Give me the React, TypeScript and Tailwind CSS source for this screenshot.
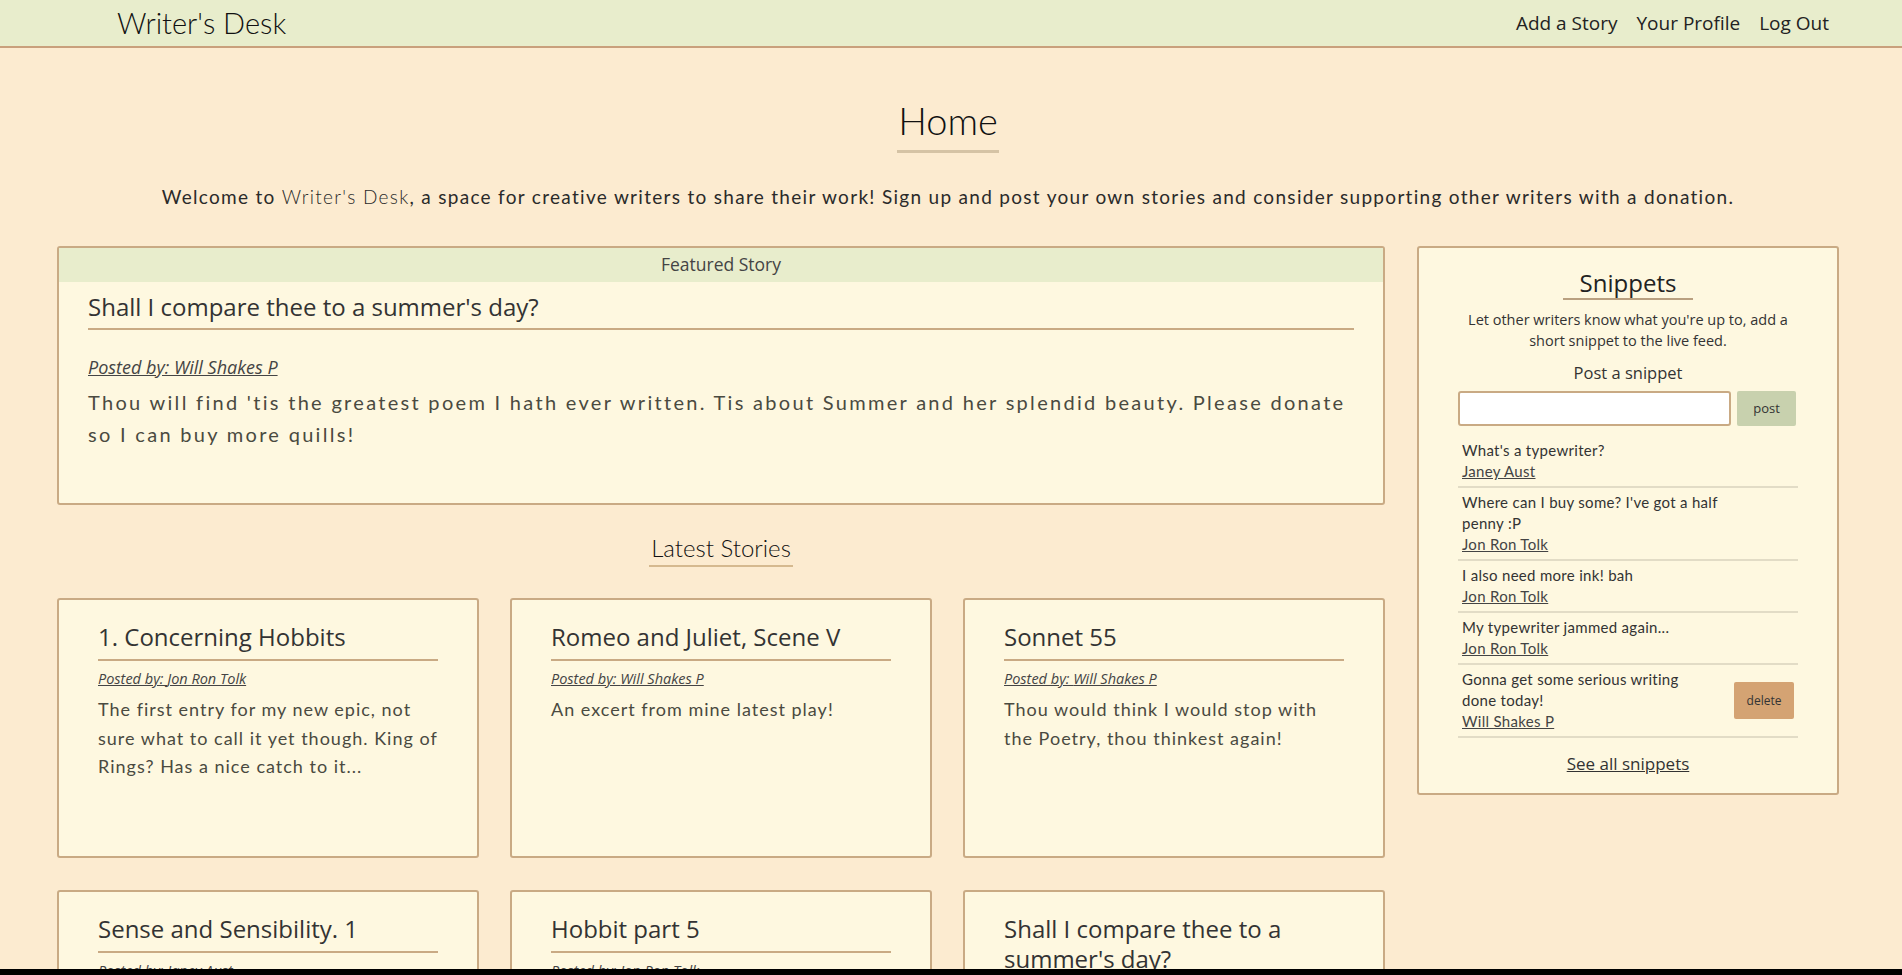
const hand = "font-['Lato','Open_Sans',sans-serif] font-light";
const round = "font-['Lato','Noto_Sans',sans-serif]";
const ui = "font-['Open_Sans','Noto_Sans',sans-serif]";

const stories = [
  { title: "1. Concerning Hobbits", author: "Jon Ron Tolk", body: "The first entry for my new epic, not sure what to call it yet though. King of Rings? Has a nice catch to it..." },
  { title: "Romeo and Juliet, Scene V", author: "Will Shakes P", body: "An excert from mine latest play!" },
  { title: "Sonnet 55", author: "Will Shakes P", body: "Thou would think I would stop with the Poetry, thou thinkest again!" },
  { title: "Sense and Sensibility. 1", author: "Janey Aust", body: "Chapter one of my newest work." },
  { title: "Hobbit part 5", author: "Jon Ron Tolk", body: "The adventure continues." },
  { title: "Shall I compare thee to a summer's day?", author: "Will Shakes P", body: "Thou will find 'tis the greatest poem I hath ever written." },
];

const snippets = [
  { text: "What's a typewriter?", author: "Janey Aust" },
  { text: "Where can I buy some? I've got a half penny :P", author: "Jon Ron Tolk" },
  { text: "I also need more ink! bah", author: "Jon Ron Tolk" },
  { text: "My typewriter jammed again...", author: "Jon Ron Tolk" },
  { text: "Gonna get some serious writing done today!", author: "Will Shakes P", mine: true },
];

function StoryCard({ s }: { s: (typeof stories)[number] }) {
  return (
    <div className="h-[260px] overflow-hidden rounded-[3px] border-2 border-[#c9aa84] bg-[#fef8e0] px-[39px] pt-[22px]">
      <h3 className={`${ui} border-b-2 border-[#c9aa84] pb-[7px] text-[24px] leading-[30px] text-[#333]`}>{s.title}</h3>
      <a href="#" className={`${ui} mt-[7px] block text-[14.5px] italic text-[#444] underline`}>Posted by: {s.author}</a>
      <p className={`${round} mt-[6px] text-[18px] leading-[28.5px] tracking-[1px] text-[#4a4a40]`}>{s.body}</p>
    </div>
  );
}

export default function App() {
  return (
    <div className="min-h-[975px] bg-[#fcebd0] text-[#222]">
      <nav className="flex h-[48px] items-center justify-between border-b-2 border-[#c9a07c] bg-[#e8edcc] pl-[117px] pr-[73px]">
        <span className={`${hand} text-[29px] text-[#111]`}>Writer's Desk</span>
        <div className={`${ui} flex gap-[19px] text-[19px] text-[#222]`}>
          <a href="#">Add a Story</a>
          <a href="#">Your Profile</a>
          <a href="#">Log Out</a>
        </div>
      </nav>

      <main className="pl-[57px] pr-[63px]">
        <div className="flex justify-center pt-[48px]">
          <h1 className={`${hand} border-b-[3px] border-[#d5c3a5] px-[1px] pb-[6px] text-[38px] leading-[48px] text-[#111]`}>Home</h1>
        </div>
        <p className={`${round} mt-[30px] text-center text-[19px] tracking-[1.3px] text-[#2a2a2a]`}>
          Welcome to <span className={hand}>Writer's Desk</span>, a space for creative writers to share their work! Sign up and post your own stories and consider supporting other writers with a donation.
        </p>

        <div className="mt-[34px] flex gap-[32px]">
          <div className="w-[1328px]">
            <div className="h-[259px] rounded-[3px] border-2 border-[#c9aa84] bg-[#fef8e0]">
              <div className={`${ui} flex h-[34px] items-center justify-center bg-[#e8edcc] text-[17.5px] text-[#444]`}>Featured Story</div>
              <div className="px-[29px]">
                <h2 className={`${ui} mt-[10px] border-b-2 border-[#c9aa84] pb-[6px] text-[24px] leading-[30px] text-[#333]`}>Shall I compare thee to a summer's day?</h2>
                <a href="#" className={`${ui} mt-[24px] block text-[18px] italic text-[#444] underline`}>Posted by: Will Shakes P</a>
                <p className={`${round} mt-[5px] text-[20px] leading-[32px] tracking-[2.3px] text-[#4a4a40]`}>
                  Thou will find 'tis the greatest poem I hath ever written. Tis about Summer and her splendid beauty. Please donate so I can buy more quills!
                </p>
              </div>
            </div>

            <div className="mt-[28px] flex justify-center">
              <h2 className={`${hand} border-b-2 border-[#d5b98f] px-[2px] pb-[2px] text-[24px] leading-[30px] text-[#111]`}>Latest Stories</h2>
            </div>

            <div className="mt-[31px] grid grid-cols-3 gap-x-[31px] gap-y-[32px]">
              {stories.map((s) => (
                <StoryCard key={s.title} s={s} />
              ))}
            </div>
          </div>

          <aside className="h-[549px] w-[422px] rounded-[3px] border-2 border-[#c9aa84] bg-[#fef8e0] px-[39px] pt-[20px]">
            <div className="flex justify-center">
              <h2 className={`${ui} border-b-2 border-[#b9a080] px-[17px] text-[24px] leading-[30px] text-[#222]`}>Snippets</h2>
            </div>
            <p className={`${ui} mt-[9px] text-center text-[14.5px] leading-[21px] text-[#333]`}>
              Let other writers know what you're up to, add a short snippet to the live feed.
            </p>
            <p className={`${ui} mt-[10px] text-center text-[16.5px] text-[#333]`}>Post a snippet</p>
            <div className="mt-[6px] flex gap-[6px]">
              <input className="h-[35px] w-[273px] rounded-[3px] border-2 border-[#c9aa84] bg-white" />
              <button className={`${ui} h-[35px] w-[59px] rounded-[2px] bg-[#c8d1ae] text-[13px] text-[#333]`}>post</button>
            </div>
            <ul className={`${round} mt-[12px] text-[15px] leading-[21px] tracking-[0.3px] text-[#333]`}>
              {snippets.map((s) => (
                <li key={s.text} className="flex items-center justify-between border-b-2 border-[#e2dcc6] px-[4px] pb-[4px] pt-[2px] [&+li]:pt-[4px]">
                  <div className={s.mine ? "w-[240px]" : "w-[262px]"}>
                    <div>{s.text}</div>
                    <a href="#" className="underline text-[#444]">{s.author}</a>
                  </div>
                  {s.mine && (
                    <button className={`${ui} h-[37px] w-[60px] rounded-[2px] bg-[#d4a373] text-[12px] tracking-normal text-[#333]`}>delete</button>
                  )}
                </li>
              ))}
            </ul>
            <div className="mt-[13px] text-center">
              <a href="#" className={`${ui} text-[17px] text-[#333] underline`}>See all snippets</a>
            </div>
          </aside>
        </div>
      </main>
      <div className="fixed bottom-0 left-0 h-[6px] w-full bg-black" />
    </div>
  );
}
